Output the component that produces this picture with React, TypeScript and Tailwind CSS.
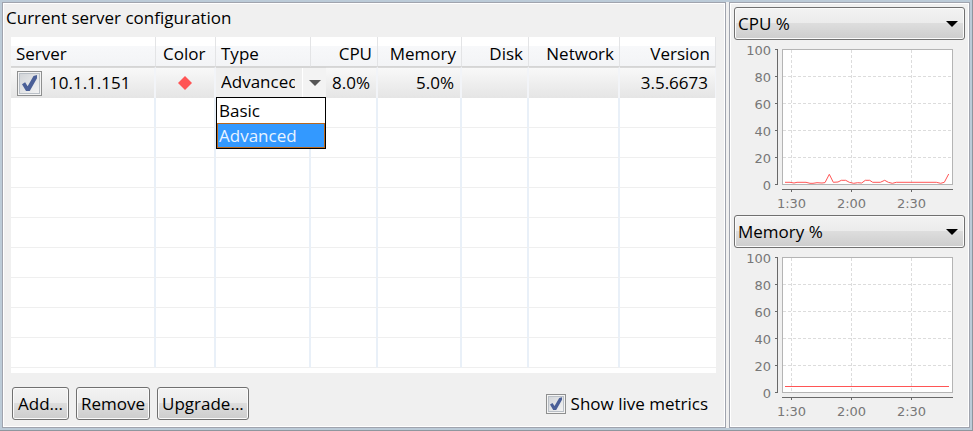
import { useState } from 'react';

const columns = [
  { name: 'Server', width: 'w-[145px]', align: 'text-left' },
  { name: 'Color', width: 'w-[60px]', align: 'text-left' },
  { name: 'Type', width: 'w-[95px]', align: 'text-left' },
  { name: 'CPU', width: 'w-[67px]', align: 'text-right' },
  { name: 'Memory', width: 'w-[84px]', align: 'text-right' },
  { name: 'Disk', width: 'w-[67px]', align: 'text-right' },
  { name: 'Network', width: 'w-[91px]', align: 'text-right' },
  { name: 'Version', width: '', align: 'text-right' },
];

const emptyRows = [0, 1, 2, 3, 4, 5, 6, 7, 8];

const bevel =
  'rounded-[3px] border border-[#707070] bg-[linear-gradient(#f3f3f3,#ebebeb_48%,#dddddd_50%,#cdcdcd)] shadow-[inset_0_0_0_1px_#fbfbfb]';

function Tick({ checked, label, onChange, id, size }: { checked: boolean; label?: string; onChange: (v: boolean) => void; id: string; size: string }) {
  return (
    <span className={`grid shrink-0 place-items-center ${size}`}>
      <input
        id={id}
        type="checkbox"
        aria-label={label}
        checked={checked}
        onChange={(e) => onChange(e.target.checked)}
        className={`col-start-1 row-start-1 appearance-none border border-[#8e8f8f] bg-[linear-gradient(135deg,#cfd2d6,#f6f6f6)] shadow-[inset_0_0_0_1px_#f4f4f4,inset_0_0_0_2px_#b9bfc6] ${size}`}
      />
      {checked && (
        <svg viewBox="0 0 20 20" className={`pointer-events-none col-start-1 row-start-1 ${size}`} aria-hidden="true">
          <path d="M4 10.5 6.5 9l2 3.1L13.2 4l2.8-.8v2.6L10.2 16H7.200z" fill="#4a5f97" />
        </svg>
      )}
    </span>
  );
}

const cpuPoints =
  '51,142.3 56,142.3 60,143 63,142.3 72,142.3 76,143.3 79,143.3 83,142.7 88,143 91,142.6 95.3,134.3 99.3,142.3 104,142 107.3,140.3 111.7,140.3 115.3,142.3 119.7,143.3 123.7,142.7 127.7,143 131.3,140.3 135.7,140.3 138.7,142.3 146.3,142.3 150.7,140.3 154.3,142.3 158.3,143.3 162.3,142.3 202.3,142.3 206.7,143.3 210.3,142.3 214.7,134';

const gridYs = [9.5, 36.5, 63.5, 90.5, 117.5, 144.5];
const gridXs = [57.5, 117.5, 177.5];
const times = ['1:30', '2:00', '2:30'];

function Chart({ metric, points }: { metric: string; points: string }) {
  return (
    <svg viewBox="0 0 231 175" className="block w-full" role="img" aria-label={`${metric} over time`}>
      <rect x="48.5" y="9.5" width="170" height="135" fill="#fff" />
      <g stroke="#dcdcdc" strokeDasharray="3 2">
        {gridYs.slice(1, 5).map((y) => (
          <path key={y} d={`M49 ${y}H218`} />
        ))}
        {gridXs.map((x) => (
          <path key={x} d={`M${x} 10V144`} />
        ))}
      </g>
      <rect x="48.5" y="9.5" width="170" height="135" fill="none" stroke="#b4b4b4" />
      <g stroke="#696969" fill="none">
        <path d="M43.5 9V145M48 149.5H219" />
        {gridYs.map((y) => (
          <path key={y} d={`M41 ${y}H43`} />
        ))}
        {gridXs.map((x) => (
          <path key={x} d={`M${x} 150V152`} />
        ))}
      </g>
      <polyline points={points} fill="none" stroke="#ff5555" />
      <g fill="#777777" className="font-['DejaVu_Sans',sans-serif] text-[13px]">
        {gridYs.map((y, i) => (
          <text key={y} x="37" y={y + 5.5} textAnchor="end">
            {100 - i * 20}
          </text>
        ))}
        {times.map((t, i) => (
          <text key={t} x={gridXs[i]} y="168" textAnchor="middle">
            {t}
          </text>
        ))}
      </g>
    </svg>
  );
}

function MetricView({ metric, points }: { metric: string; points: string }) {
  const [value, setValue] = useState(metric);
  return (
    <section>
      <div className="grid items-center">
        <select
          aria-label="Metric"
          value={value}
          onChange={(e) => setValue(e.target.value)}
          className={`col-start-1 row-start-1 h-[33px] w-full appearance-none pl-[3px] ${bevel}`}
        >
          <option>CPU %</option>
          <option>Memory %</option>
        </select>
        <svg viewBox="0 0 12 6" className="pointer-events-none col-start-1 row-start-1 mr-[7px] h-[6px] w-3 justify-self-end" aria-hidden="true">
          <path d="M0 0H12L6 6z" />
        </svg>
      </div>
      <Chart metric={value} points={points} />
    </section>
  );
}

function TypeCombo() {
  const [type, setType] = useState('Advanced');
  return (
    <div className="relative h-[31px]">
      <div className="absolute top-0 left-0 z-10 w-[110px]">
        <div className="grid items-center">
          <select
            aria-label="Type"
            value={type}
            onChange={(e) => setType(e.target.value)}
            className="col-start-1 row-start-1 h-[30px] w-full appearance-none border-t border-[#d5d5d5] bg-[#efefef] pr-[31px] pb-0.5 pl-[5px]"
          >
            <option>Basic</option>
            <option>Advanced</option>
          </select>
          <span className="pointer-events-none col-start-1 row-start-1 mt-px grid h-[29px] w-6 place-items-center justify-self-end border-l border-white bg-[#f3f3f3]">
            <svg viewBox="0 0 12 6" className="h-[6px] w-3" aria-hidden="true">
              <path d="M0 0H12L6 6z" fill="#555" />
            </svg>
          </span>
        </div>
        <ul role="listbox" aria-label="Type options" className="border border-black bg-white leading-[23px]">
          {['Basic', 'Advanced'].map((option) => (
            <li
              key={option}
              role="option"
              aria-selected={option === type}
              onClick={() => setType(option)}
              className={`h-[25px] border pl-px ${option === type ? 'border-[#b8681f] bg-[#3399ff] text-[#e8f3ff]' : 'border-white'}`}
            >
              {option}
            </li>
          ))}
        </ul>
      </div>
    </div>
  );
}

export default function App() {
  const [enabled, setEnabled] = useState(true);
  const [live, setLive] = useState(true);
  const cell = 'border-t border-r-2 border-t-[#d9d9d9] border-r-[#f2f4f8] p-0 last:border-r';
  return (
    <div className="flex min-h-screen border-r border-b border-[#8f969e] bg-[#bccbd8] p-[2px] font-['Open_Sans','Noto_Sans',sans-serif] text-[17px] leading-6 text-black">
      <div className="flex flex-1 gap-[3px] bg-[#f0f0f0]">
        <main className="flex min-w-0 flex-1 flex-col border border-[#a0a4ae] pt-[3px] pr-[9px] pb-[7px] pl-2 shadow-[inset_0_0_0_1px_#fff]">
          <h1 className="-ml-1.5 h-[31px] pl-px">Current server configuration</h1>
          <div className="flex-1 overflow-hidden bg-white">
            <table className="w-full table-fixed border-separate border-spacing-0">
              <thead>
                <tr>
                  {columns.map((c) => (
                    <th
                      key={c.name}
                      scope="col"
                      className={`h-[30px] border-r border-b border-r-[#e3e4e6] border-b-[#d5d5d5] bg-[linear-gradient(#fff_30%,#f7f8fa_32%,#f3f4f6)] pt-1 pr-[5px] pb-0 font-normal ${c.name === 'Color' ? 'pl-[7px]' : 'pl-[5px]'} ${c.width} ${c.align}`}
                    >
                      {c.name}
                    </th>
                  ))}
                </tr>
              </thead>
              <tbody>
                <tr className="bg-[linear-gradient(#f9f9f9,#e5e5e5)]">
                  <td className={cell}>
                    <div className="flex items-center gap-[7px] pl-1.5">
                      <Tick id="server-enabled" label="Enable 10.1.1.151" checked={enabled} onChange={setEnabled} size="size-[25px]" />
                      <span>10.1.1.151</span>
                    </div>
                  </td>
                  <td className={cell}>
                    <svg viewBox="0 0 14 14" className="mx-auto size-[14px]" role="img" aria-label="Red">
                      <path d="M7 0 14 7 7 14 0 7z" fill="#ff5555" />
                    </svg>
                  </td>
                  <td className="p-0">
                    <TypeCombo />
                  </td>
                  <td className={`${cell} text-right`}>
                    <span className="pr-1.5">8.0%</span>
                  </td>
                  <td className={`${cell} text-right`}>
                    <span className="pr-1.5">5.0%</span>
                  </td>
                  <td className={cell} />
                  <td className={cell} />
                  <td className={`${cell} text-right`}>
                    <span className="pr-[7px]">3.5.6673</span>
                  </td>
                </tr>
                {emptyRows.map((r) => (
                  <tr key={r}>
                    {columns.map((c) => (
                      <td key={c.name} className="h-[30px] border-r-2 border-b border-r-[#e9f0f8] border-b-[#efefef] p-0 last:border-r-0" />
                    ))}
                  </tr>
                ))}
              </tbody>
            </table>
          </div>
          <footer className="mt-[14px] flex items-center gap-[7px] pl-px">
            <button type="button" className={`h-[33px] min-w-[57px] px-1 ${bevel}`}>Add...</button>
            <button type="button" className={`h-[33px] px-1 ${bevel}`}>Remove</button>
            <button type="button" className={`h-[33px] px-1 ${bevel}`}>Upgrade...</button>
            <div className="mr-2 ml-auto flex items-center gap-[5px]">
              <Tick id="live-metrics" checked={live} onChange={setLive} size="size-5" />
              <label htmlFor="live-metrics">Show live metrics</label>
            </div>
          </footer>
        </main>
        <aside className="w-[241px] shrink-0 border border-[#a0a4ae] px-1 pt-1 shadow-[inset_0_0_0_1px_#fff]">
          <MetricView metric="CPU %" points={cpuPoints} />
          <MetricView metric="Memory %" points="51,138.5 215,138.5" />
        </aside>
      </div>
    </div>
  );
}
